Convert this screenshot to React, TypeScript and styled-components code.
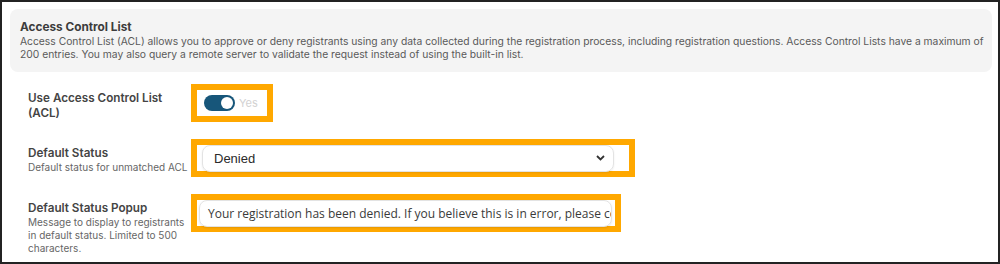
import React from "react";
import styled, { createGlobalStyle } from "styled-components";

const GlobalStyle = createGlobalStyle`
    html, body {
        margin: 0;
        padding: 0;
        background: #ffffff;
    }
    * {
        box-sizing: border-box;
    }
`;

const Frame = styled.div`
    width: 1000px;
    height: 264px;
    border: 2px solid #232323;
    padding: 7px 6px 0 8px;
    font-family: Inter, "Noto Sans", sans-serif;
    overflow: hidden;
    background: #fff;
`;

const InfoPanel = styled.div`
    background: #f4f4f4;
    border-radius: 8px;
    padding: 10px 4px 11px 10px;
`;

const PanelTitle = styled.div`
    font-size: 11.8px;
    line-height: 16px;
    font-weight: 700;
    color: #3c3c3c;
`;

const PanelText = styled.div`
    font-size: 10.3px;
    line-height: 13px;
    color: #5a5a5a;
`;

const Form = styled.div`
    display: flex;
    flex-direction: column;
    gap: 17px;
    padding: 12px 0 0 18px;
`;

const Row = styled.div`
    display: flex;
    align-items: flex-start;
`;

const LabelCol = styled.div`
    width: 163px;
    flex-shrink: 0;
    padding-top: 7px;
`;

const Label = styled.div`
    font-size: 11.7px;
    line-height: 15px;
    font-weight: 600;
    color: #444;
`;

const Hint = styled.div`
    font-size: 10px;
    line-height: 13px;
    color: #666;
    white-space: nowrap;
`;

const HintWrap = styled(Hint)`
    white-space: normal;
    width: 160px;
`;

const Highlight = styled.div<{ $w: number; $pad: string }>`
    width: ${({ $w }) => $w}px;
    height: 38px;
    border: 6px solid #ffa800;
    padding: ${({ $pad }) => $pad};
    display: flex;
    align-items: center;
    background: #fff;
`;

const Toggle = styled.div`
    width: 31px;
    height: 16px;
    border-radius: 8px;
    background: #17567a;
    position: relative;
    flex-shrink: 0;
`;

const Knob = styled.div`
    position: absolute;
    top: 2px;
    right: 2px;
    width: 12px;
    height: 12px;
    border-radius: 50%;
    background: #fff;
`;

const ToggleText = styled.span`
    margin-left: 4px;
    font-size: 11px;
    color: #d2d2d2;
`;

const Select = styled.div`
    flex: 1;
    height: 27px;
    border: 1px solid #e3e3e3;
    border-radius: 8px;
    box-shadow: 0 1px 2px rgba(0, 0, 0, 0.08);
    display: flex;
    align-items: center;
    justify-content: space-between;
    padding: 0 8px 0 11px;
    font-family: "Liberation Sans", Arial, sans-serif;
    font-size: 13px;
    color: #2a2a2a;
`;

const TextInput = styled.div`
    flex: 1;
    height: 27px;
    border: 1px solid #e3e3e3;
    border-radius: 8px;
    box-shadow: 0 1px 2px rgba(0, 0, 0, 0.1);
    display: flex;
    align-items: center;
    padding: 0 0 0 8px;
    overflow: hidden;
    white-space: nowrap;
    font-family: "Open Sans", sans-serif;
    font-size: 12px;
    color: #3a3a3a;
`;

const Chevron = () => (
    <svg width="9" height="6" viewBox="0 0 9 6">
        <polyline points="1,1 4.5,4.5 8,1" fill="none" stroke="#333" strokeWidth="1.8" />
    </svg>
);

export default function App() {
    return (
        <>
            <GlobalStyle />
            <Frame>
                <InfoPanel>
                    <PanelTitle>Access Control List</PanelTitle>
                    <PanelText>
                        Access Control List (ACL) allows you to approve or deny registrants using any data collected during the
                        registration process, including registration questions. Access Control Lists have a maximum of 200 entries.
                        You may also query a remote server to validate the request instead of using the built-in list.
                    </PanelText>
                </InfoPanel>
                <Form>
                    <Row>
                        <LabelCol>
                            <Label>Use Access Control List (ACL)</Label>
                        </LabelCol>
                        <Highlight $w={82} $pad="0 0 0 7px">
                            <Toggle>
                                <Knob />
                            </Toggle>
                            <ToggleText>Yes</ToggleText>
                        </Highlight>
                    </Row>
                    <Row>
                        <LabelCol>
                            <Label>Default Status</Label>
                            <Hint>Default status for unmatched ACL</Hint>
                        </LabelCol>
                        <Highlight $w={444} $pad="0 15px 0 5px">
                            <Select>
                                <span>Denied</span>
                                <Chevron />
                            </Select>
                        </Highlight>
                    </Row>
                    <Row>
                        <LabelCol>
                            <Label>Default Status Popup</Label>
                            <HintWrap>Message to display to registrants in default status. Limited to 500 characters.</HintWrap>
                        </LabelCol>
                        <Highlight $w={430} $pad="0 3px 0 2px">
                            <TextInput>
                                Your registration has been denied. If you believe this is in error, please contact the event organizer.
                            </TextInput>
                        </Highlight>
                    </Row>
                </Form>
            </Frame>
        </>
    );
}
